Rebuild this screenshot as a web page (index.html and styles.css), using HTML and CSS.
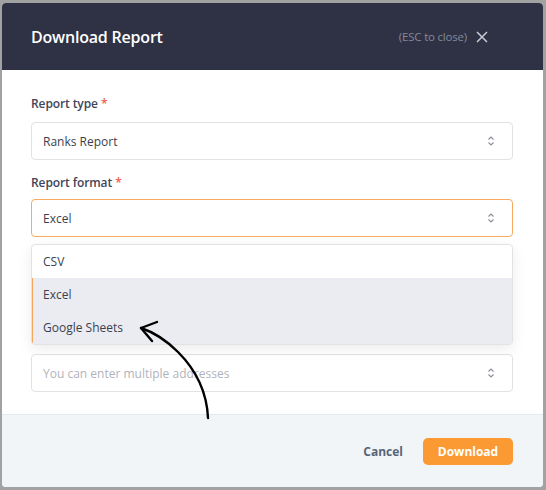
FILE: index.html
```html
<!DOCTYPE html>
<html>
<head>
<meta charset="utf-8">
<link rel="stylesheet" href="styles.css">
</head>
<body>
<div class="modal">
  <div class="header">
    <h1 class="title">Download Report</h1>
    <div class="close">
      <span class="esc">(ESC to close)</span>
      <svg class="x" width="12" height="12" viewBox="0 0 12 12"><path d="M1 1L11 11M11 1L1 11" stroke="#c9cbd4" stroke-width="1.5" fill="none"/></svg>
    </div>
  </div>
  <div class="body">
    <div class="field">
      <div class="label">Report type <span class="req">*</span></div>
      <div class="select"><span>Ranks Report</span><svg class="chev" width="8" height="12" viewBox="0 0 8 12"><path d="M1.5 4.5L4 2L6.5 4.5M1.5 7.5L4 10L6.5 7.5" stroke="#8b8e99" stroke-width="1.1" fill="none"/></svg></div>
    </div>
    <div class="field tight">
      <div class="label">Report format <span class="req">*</span></div>
      <div class="select active"><span>Excel</span><svg class="chev" width="8" height="12" viewBox="0 0 8 12"><path d="M1.5 4.5L4 2L6.5 4.5M1.5 7.5L4 10L6.5 7.5" stroke="#8b8e99" stroke-width="1.1" fill="none"/></svg></div>
      <ul class="menu">
        <li class="opt">CSV</li>
        <li class="opt sel">Excel</li>
        <li class="opt sel">Google Sheets</li>
      </ul>
    </div>
    <div class="covered"></div>
    <div class="field">
      <div class="select"><span class="ph">You can enter multiple addresses</span><svg class="chev" width="8" height="12" viewBox="0 0 8 12"><path d="M1.5 4.5L4 2L6.5 4.5M1.5 7.5L4 10L6.5 7.5" stroke="#8b8e99" stroke-width="1.1" fill="none"/></svg></div>
    </div>
  </div>
  <div class="footer">
    <button class="cancel">Cancel</button>
    <button class="download">Download</button>
  </div>
  <svg class="arrow" width="546" height="490" viewBox="0 0 546 490">
    <path d="M208 418 C 207 395, 198 372, 178 352 C 166 340, 153 332, 141 328" stroke="#000" stroke-width="2.4" fill="none" stroke-linecap="round"/>
    <path d="M157 322 L141 328 L152 341" stroke="#000" stroke-width="2.4" fill="none" stroke-linecap="round" stroke-linejoin="round"/>
  </svg>
</div>
</body>
</html>
```
FILE: styles.css
```css
* { box-sizing: border-box; }
html, body { margin: 0; padding: 0; }
body {
  width: 546px;
  height: 490px;
  background: #a2a2a2;
  padding: 3px 3px 3px 2px;
  font-family: "Open Sans", "Liberation Sans", sans-serif;
  overflow: hidden;
}
.modal {
  width: 541px;
  height: 484px;
  border-radius: 4px;
  overflow: hidden;
  background: #fff;
  display: flex;
  flex-direction: column;
}
.header {
  height: 67px;
  flex: none;
  background: #2f3245;
  display: flex;
  align-items: center;
  justify-content: space-between;
  padding: 0 55px 0 29px;
}
.title {
  margin: 0;
  color: #fff;
  font-size: 16px;
  font-weight: 600;
  letter-spacing: -0.2px;
}
.close {
  display: flex;
  align-items: center;
  gap: 9px;
}
.esc {
  color: #858899;
  font-size: 11.5px;
  letter-spacing: -0.2px;
}
.body {
  flex: 1;
  padding: 26px 30px 0 29px;
  display: flex;
  flex-direction: column;
  gap: 15px;
}
.field {
  position: relative;
  display: flex;
  flex-direction: column;
  gap: 10px;
}
.field.tight { gap: 8px; }
.covered {
  height: 87px;
  flex: none;
}
.label {
  font-size: 12px;
  line-height: 16px;
  font-weight: 600;
  color: #42455a;
  letter-spacing: -0.1px;
}
.req { color: #ef5b45; }
.select {
  height: 38px;
  border: 1px solid #e1e2e6;
  border-radius: 4px;
  display: flex;
  align-items: center;
  justify-content: space-between;
  padding: 0 17px 0 11px;
  font-size: 12px;
  color: #3c3f4e;
  background: #fff;
}
.select.active { border-color: #f8ab60; }
.ph { color: #b1b3bc; }
.chev { display: block; }
.menu {
  position: absolute;
  left: 0;
  right: 0;
  top: 69px;
  margin: 0;
  padding: 0;
  list-style: none;
  background: #fff;
  border: 1px solid #e1e2e6;
  border-radius: 4px;
  box-shadow: 0 4px 14px rgba(0, 0, 0, 0.08);
  overflow: hidden;
  z-index: 2;
}
.opt {
  height: 33px;
  display: flex;
  align-items: center;
  padding-left: 11px;
  font-size: 12px;
  color: #3c3f4e;
}
.opt.sel {
  background: #ebecf1;
  border-left: 1px solid #f7a65a;
  padding-left: 10px;
}
.footer {
  height: 73px;
  flex: none;
  background: #f2f5f8;
  border-top: 1px solid #e5e8ee;
  display: flex;
  align-items: center;
  justify-content: flex-end;
  padding: 0 30px 0 0;
  gap: 20px;
}
button {
  font-family: inherit;
  border: none;
  cursor: pointer;
}
.cancel {
  background: none;
  color: #566478;
  font-size: 12px;
  font-weight: 700;
  padding: 0;
}
.download {
  background: #fb9a33;
  color: #fff;
  font-size: 12px;
  font-weight: 700;
  width: 90px;
  height: 27px;
  border-radius: 5px;
}
.arrow {
  position: absolute;
  left: 0;
  top: 0;
  pointer-events: none;
  z-index: 5;
}
```
